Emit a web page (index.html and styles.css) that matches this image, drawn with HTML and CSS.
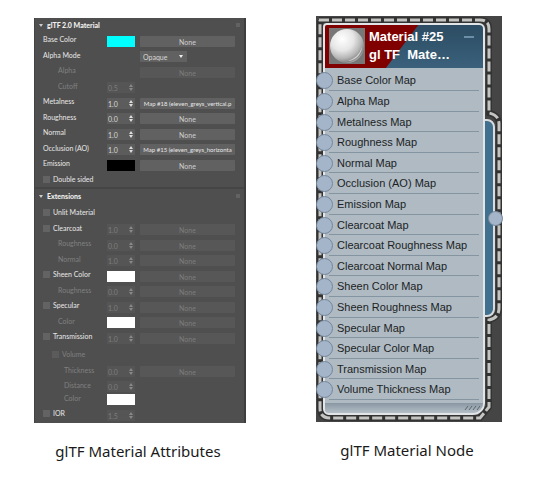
FILE: index.html
```html
<!DOCTYPE html>
<html lang="en">
<head>
<meta charset="utf-8">
<title>glTF Material</title>
<link rel="stylesheet" href="styles.css">
</head>
<body>
<main class="page">
  <figure class="figure">
    <form class="panel">
      <section class="section">
        <h2 class="section-title">glTF 2.0 Material</h2>
        <div class="rows">
          <div class="row"><label class="name" for="base">Base Color</label><input class="swatch" id="base" type="color" value="#00ffff"><button class="map" type="button">None</button></div>
          <div class="row"><label class="name" for="mode">Alpha Mode</label><span class="picker"><select id="mode"><option>Opaque</option></select></span></div>
          <div class="row off"><span class="name in1">Alpha</span><button class="map" type="button" disabled>None</button></div>
          <div class="row off"><label class="name in1" for="cutoff">Cutoff</label><span class="spin"><input id="cutoff" value="0.5" disabled></span></div>
          <div class="row"><label class="name" for="metal">Metalness</label><span class="spin"><input id="metal" value="1.0"></span><button class="map long" type="button">Map #18 (eleven_greys_vertical.p</button></div>
          <div class="row"><label class="name" for="rough">Roughness</label><span class="spin"><input id="rough" value="0.0"></span><button class="map" type="button">None</button></div>
          <div class="row"><label class="name" for="normal">Normal</label><span class="spin"><input id="normal" value="1.0"></span><button class="map" type="button">None</button></div>
          <div class="row"><label class="name" for="ao">Occlusion (AO)</label><span class="spin"><input id="ao" value="1.0"></span><button class="map long" type="button">Map #15 (eleven_greys_horizonta</button></div>
          <div class="row"><label class="name" for="emit">Emission</label><input class="swatch" id="emit" type="color" value="#000000"><button class="map" type="button">None</button></div>
          <div class="row"><label class="name"><input type="checkbox">Double sided</label></div>
        </div>
      </section>
      <section class="section">
        <h2 class="section-title">Extensions</h2>
        <div class="rows extensions">
          <div class="row"><label class="name"><input type="checkbox">Unlit Material</label></div>
          <div class="row"><label class="name"><input type="checkbox">Clearcoat</label><span class="spin off"><input aria-label="Clearcoat amount" value="1.0" disabled></span><button class="map" type="button" disabled>None</button></div>
          <div class="row off"><label class="name in1" for="ccr">Roughness</label><span class="spin"><input id="ccr" value="0.0" disabled></span><button class="map" type="button" disabled>None</button></div>
          <div class="row off"><label class="name in1" for="ccn">Normal</label><span class="spin"><input id="ccn" value="1.0" disabled></span><button class="map" type="button" disabled>None</button></div>
          <div class="row"><label class="name"><input type="checkbox">Sheen Color</label><input class="swatch" aria-label="Sheen color" type="color" value="#ffffff"><button class="map" type="button" disabled>None</button></div>
          <div class="row off"><label class="name in1" for="shr">Roughness</label><span class="spin"><input id="shr" value="0.0" disabled></span><button class="map" type="button" disabled>None</button></div>
          <div class="row"><label class="name"><input type="checkbox">Specular</label><span class="spin off"><input aria-label="Specular amount" value="1.0" disabled></span><button class="map" type="button" disabled>None</button></div>
          <div class="row off"><label class="name in1" for="spc">Color</label><input class="swatch" id="spc" type="color" value="#ffffff"><button class="map" type="button" disabled>None</button></div>
          <div class="row"><label class="name"><input type="checkbox">Transmission</label><span class="spin off"><input aria-label="Transmission amount" value="1.0" disabled></span><button class="map" type="button" disabled>None</button></div>
        </div>
        <div class="rows volume">
          <div class="row off"><label class="name group"><input type="checkbox" disabled>Volume</label></div>
          <div class="row off"><label class="name in2" for="thick">Thickness</label><span class="spin"><input id="thick" value="0.0" disabled></span><button class="map" type="button" disabled>None</button></div>
          <div class="row off tight"><label class="name in2" for="dist">Distance</label><span class="spin"><input id="dist" value="0.0" disabled></span></div>
          <div class="row off"><label class="name in2" for="vcol">Color</label><input class="swatch" id="vcol" type="color" value="#ffffff"></div>
          <div class="row"><label class="name"><input type="checkbox">IOR</label><span class="spin off"><input aria-label="Index of refraction" value="1.5" disabled></span></div>
        </div>
      </section>
    </form>
    <figcaption>glTF Material Attributes</figcaption>
  </figure>

  <figure class="figure">
    <div class="canvas">
      <svg class="selection" viewBox="0 0 186 406" preserveAspectRatio="none" aria-hidden="true">
        <path d="M3 4H164Q173 4 173 13V97Q183 99 183 108V292Q183 302 173 304V391L164 402H14Q4 402 4 392V4" fill="none" stroke="#333" stroke-width="6"/>
        <path d="M3 4H164Q173 4 173 13V97Q183 99 183 108V292Q183 302 173 304V391L164 402H14Q4 402 4 392V4" fill="none" stroke="#c4c4c2" stroke-width="3" stroke-dasharray="10 3"/>
      </svg>
      <div class="output"><span class="socket"></span></div>
      <article class="node">
        <header class="node-head">
          <svg class="thumb" viewBox="0 0 36 36" aria-hidden="true">
            <defs><radialGradient id="ball" cx=".36" cy=".3" r=".75"><stop offset="0" stop-color="#fff"/><stop offset=".45" stop-color="#e6e6e6"/><stop offset=".75" stop-color="#b5b5b5"/><stop offset=".92" stop-color="#868686"/><stop offset="1" stop-color="#bbb"/></radialGradient></defs>
            <rect width="36" height="36" fill="#777"/>
            <circle cx="18" cy="18" r="17" fill="url(#ball)"/>
            <path d="M33 19A15 15 0 0 1 19 33Q30 29 33 19Z" fill="#eee" opacity=".7"/>
          </svg>
          <h2 class="node-title">Material #25<br>gl TF&nbsp; Mate…</h2>
          <button class="collapse" type="button" aria-label="Collapse"></button>
        </header>
        <ul class="slots">
          <li>Base Color Map</li>
          <li>Alpha Map</li>
          <li>Metalness Map</li>
          <li>Roughness Map</li>
          <li>Normal Map</li>
          <li>Occlusion (AO) Map</li>
          <li>Emission Map</li>
          <li>Clearcoat Map</li>
          <li>Clearcoat Roughness Map</li>
          <li>Clearcoat Normal Map</li>
          <li>Sheen Color Map</li>
          <li>Sheen Roughness Map</li>
          <li>Specular Map</li>
          <li>Specular Color Map</li>
          <li>Transmission Map</li>
          <li>Volume Thickness Map</li>
        </ul>
        <footer class="node-foot">
          <svg viewBox="0 0 16 6" aria-hidden="true"><path d="M1 5L4 1M5 5L8 1M9 5L12 1M13 5L16 1" stroke="#59636c" stroke-width="1"/></svg>
        </footer>
      </article>
    </div>
    <figcaption>glTF Material Node</figcaption>
  </figure>
</main>
</body>
</html>
```
FILE: styles.css
```css
* { box-sizing: border-box; }

body {
  margin: 0;
  background: #fff;
  font-family: "Liberation Sans", sans-serif;
}

.page {
  display: grid;
  grid-template-columns: 212fr 186fr;
  gap: 70px;
  align-items: start;
  padding: 16px 35px 0 34px;
}

.figure { margin: 0; min-width: 0; }

figcaption {
  margin-top: 17px;
  padding-right: 4px;
  font: 15px/22px "Noto Sans", "Open Sans", sans-serif;
  color: #1a1a1a;
  text-align: center;
}

/* Attribute panel */

.panel {
  margin-top: 2px;
  padding-bottom: 1px;
  background: #4f4f4f;
  border-left: 1px solid #444;
  border-right: 2px solid #3e3e3e;
  font-family: Lato, sans-serif;
  font-size: 7px;
  color: #e8e8e8;
}

.section + .section { border-top: 2px solid #454545; }

.section-title {
  display: flex;
  align-items: center;
  gap: 4px;
  height: 14px;
  margin: 0;
  padding: 0 4px;
  font-size: 7px;
  font-weight: 900;
  color: #f0f0f0;
}

.section-title::before {
  content: "";
  border: 2px solid transparent;
  border-top: 3px solid #ccc;
  border-bottom: 0;
}

.section-title::after {
  content: "";
  width: 4px;
  height: 4px;
  margin-left: auto;
  background: #626262;
}

.rows { padding: 0 9px 0 8px; }
.extensions { padding-top: 2px; }
.volume { padding-top: 2px; }

.row {
  display: grid;
  grid-template-columns: 59px 28px 1fr;
  column-gap: 5px;
  align-items: end;
  height: 16px;
  padding-bottom: 1px;
}

.row:nth-child(even) { height: 15px; }
.row.tight { height: 13px; }

.name {
  display: flex;
  align-items: center;
  height: 14px;
  white-space: nowrap;
  align-self: start;
}

.in1 { padding-left: 15px; }
.in2 { padding-left: 21px; }
.group { padding-left: 9px; }

.off .name { color: #808080; }

input[type="checkbox"] {
  appearance: none;
  width: 7px;
  height: 7px;
  margin: 0 3px 0 0;
  background: #636363;
}

.off input[type="checkbox"] { background: #5b5b5b; }

.swatch {
  appearance: none;
  width: 100%;
  height: 11px;
  margin: 0;
  padding: 0;
  border: 0;
  background: none;
}

.swatch::-webkit-color-swatch-wrapper { padding: 0; }
.swatch::-webkit-color-swatch { border: 0; border-radius: 0; }

.spin {
  position: relative;
  height: 11px;
  background: #5c5c5c;
}

.spin input {
  display: block;
  width: 100%;
  height: 11px;
  padding: 0 1px;
  border: 0;
  background: none;
  font: inherit;
  color: #d8d8d8;
}

.spin::before,
.spin::after {
  content: "";
  position: absolute;
  right: 2px;
  border: 2px solid transparent;
}

.spin::before { top: 2px; border-top: 0; border-bottom: 3px solid #ddd; }
.spin::after { bottom: 2px; border-bottom: 0; border-top: 3px solid #ddd; }

.off .spin,
.spin.off { background: #555; }

.off .spin input,
.spin.off input { color: #7d7d7d; }

.off .spin::before,
.spin.off::before { border-bottom-color: #888; }

.off .spin::after,
.spin.off::after { border-top-color: #888; }

.map {
  grid-column: 3;
  display: flex;
  justify-content: center;
  align-items: center;
  min-width: 0;
  height: 11px;
  padding: 0;
  border: 0;
  border-radius: 1px;
  background: #616161;
  font: inherit;
  color: #d0d0d0;
  white-space: nowrap;
}

.map.long { font-size: 6px; color: #e8e8e8; }
.map:disabled { background: #575757; color: #7d7d7d; }

.picker {
  grid-column: 3;
  position: relative;
  width: 47px;
  height: 11px;
  background: #616161;
}

.picker select {
  appearance: none;
  display: block;
  width: 100%;
  height: 11px;
  padding: 0 3px;
  border: 0;
  background: none;
  font: inherit;
  color: #d8d8d8;
}

.picker::after {
  content: "";
  position: absolute;
  top: 4px;
  right: 4px;
  border: 2px solid transparent;
  border-top: 3px solid #eee;
  border-bottom: 0;
}

/* Node canvas */

.canvas {
  position: relative;
  padding: 7px 17px 7px 7px;
  background: #454545;
}

.selection {
  position: absolute;
  inset: 0;
  width: 100%;
  height: 100%;
}

.output {
  position: absolute;
  top: 103px;
  bottom: 105px;
  right: 7px;
  display: flex;
  align-items: center;
  width: 14px;
  border: 2px solid #d9dde0;
  border-radius: 0 8px 8px 0;
  background: #41708f;
}

.socket,
.slots li::before {
  flex: none;
  width: 15px;
  height: 15px;
  border: 1px solid #74869b;
  border-radius: 50%;
  background: #a5b5c9;
}

.socket { margin-left: 5px; }

.node {
  position: relative;
  border: 2px solid #e2e5e7;
  border-radius: 4px 6px 12px 6px;
  background: #afbac3;
}

.node-head {
  display: flex;
  align-items: flex-start;
  gap: 4px;
  height: 43px;
  padding: 3px 9px 0 4px;
  border-radius: 2px 4px 0 0;
  background: linear-gradient(127deg, #800000 74px, transparent 75px), linear-gradient(#2c4c62, #3a617c);
}

.thumb { flex: none; width: 36px; height: 36px; }

.node-title {
  flex: 1;
  margin: 0;
  font-size: 13px;
  line-height: 18px;
  white-space: nowrap;
  color: #fff;
}

.collapse {
  width: 10px;
  height: 2px;
  margin-top: 8px;
  padding: 0;
  border: 0;
  background: #6c8ea6;
}

.slots {
  margin: 0;
  padding: 2px 4px 0;
  list-style: none;
}

.slots li {
  display: flex;
  align-items: center;
  gap: 4px;
  height: 21px;
  border-bottom: 1px solid #8494a1;
  font-size: 11px;
  color: #1c1f23;
}

.slots li:nth-child(5n + 3),
.slots li:nth-child(5n) { height: 20px; }

.slots li::before {
  content: "";
  margin-left: -13px;
}

.slots li + li::before { margin-top: 1px; }

.node-foot {
  display: flex;
  justify-content: flex-end;
  align-items: center;
  height: 10px;
  margin-top: 3px;
  padding-right: 3px;
  background: linear-gradient(#8997a3, #b4bec6);
  border-radius: 0 0 10px 4px;
}

.node-foot svg { width: 16px; height: 6px; }
```
